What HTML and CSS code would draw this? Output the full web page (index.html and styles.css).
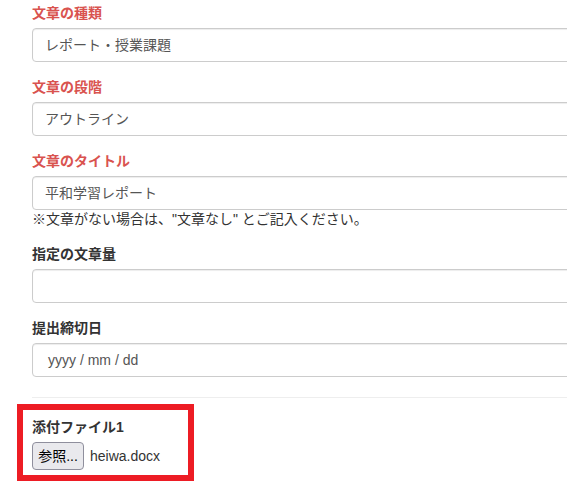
FILE: index.html
```html
<!DOCTYPE html>
<html lang="ja">
<head>
    <meta charset="UTF-8">
    <title>文章の登録</title>
    <link rel="stylesheet" href="styles.css">
</head>
<body>
    <form class="doc-form">
        <div class="form-group">
            <label class="required">文章の種類</label>
            <div class="form-control">レポート・授業課題</div>
        </div>

        <div class="form-group">
            <label class="required">文章の段階</label>
            <div class="form-control">アウトライン</div>
        </div>

        <div class="form-group">
            <label class="required">文章のタイトル</label>
            <div class="form-control">平和学習レポート</div>
            <p class="help-text">※文章がない場合は、"文章なし" とご記入ください。</p>
        </div>

        <div class="form-group">
            <label>指定の文章量</label>
            <div class="form-control"></div>
        </div>

        <div class="form-group">
            <label>提出締切日</label>
            <div class="form-control date-control">yyyy / mm / dd</div>
        </div>

        <hr class="divider">

        <div class="attach-box">
            <label>添付ファイル1</label>
            <div class="file-row">
                <span class="file-btn">参照...</span>
                <span class="file-name">heiwa.docx</span>
            </div>
        </div>
    </form>
</body>
</html>
```

FILE: styles.css
```css
* {
    margin: 0;
    padding: 0;
    box-sizing: border-box;
}

body {
    font-family: "Liberation Sans", "Noto Sans CJK JP", sans-serif;
    font-size: 14px;
    line-height: 20px;
    color: #333;
    background: #fff;
    overflow: hidden;
}

.doc-form {
    padding: 3px 0 0 32px;
    width: 620px;
}

.form-group {
    margin-bottom: 15px;
}

.form-group label,
.attach-box label {
    display: block;
    font-weight: bold;
    margin-bottom: 5px;
    color: #333;
}

.form-group label.required {
    color: #d9534f;
}

.form-control {
    height: 34px;
    padding: 6px 12px;
    border: 1px solid #ccc;
    border-radius: 4px;
    box-shadow: inset 0 1px 1px rgba(0, 0, 0, 0.075);
    color: #555;
    font-size: 14px;
    line-height: 20px;
}

.date-control {
    padding-left: 15px;
    color: #555;
}

.help-text {
    margin-top: -1px;
    color: #333;
}

.divider {
    border: 0;
    border-top: 1px solid #eee;
    margin: 20px 0 6px;
}

.attach-box {
    width: 177px;
    margin-left: -15px;
    border: 6px solid #ed1c24;
    padding: 7px 9px 5px;
}

.file-row {
    display: flex;
    align-items: center;
    gap: 6px;
}

.file-btn {
    display: inline-block;
    width: 52px;
    height: 28px;
    padding: 3px 0 0;
    text-align: center;
    border: 1px solid #8f8f9d;
    border-radius: 4px;
    background: #e9e9ed;
    color: #000;
    line-height: 21px;
}

.file-name {
    color: #333;
}
```
